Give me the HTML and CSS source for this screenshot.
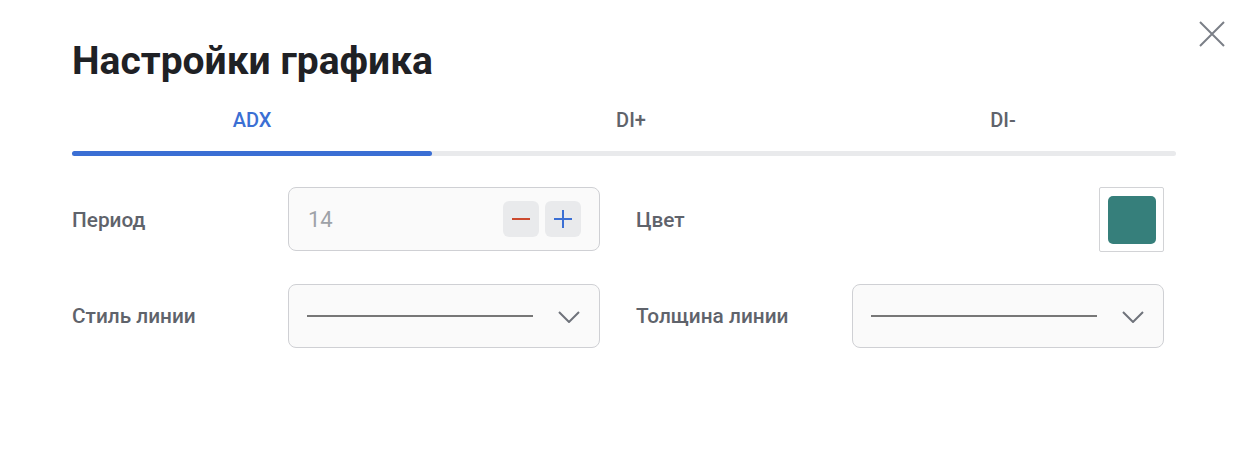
FILE: index.html
```html
<!DOCTYPE html>
<html lang="ru">
<head>
<meta charset="utf-8">
<title>Настройки графика</title>
<link rel="stylesheet" href="styles.css">
</head>
<body>
<div class="modal">
  <button class="close" aria-label="Закрыть">
    <svg width="26" height="26" viewBox="0 0 26 26"><path d="M1 1L25 25M25 1L1 25" stroke="#7b7f87" stroke-width="2" fill="none"/></svg>
  </button>
  <h1 class="title">Настройки графика</h1>
  <div class="tabs">
    <div class="tab active">ADX</div>
    <div class="tab">DI+</div>
    <div class="tab">DI-</div>
  </div>
  <div class="track"><div class="track-fill"></div></div>
  <div class="form">
    <div class="label">Период</div>
    <div class="field stepper">
      <span class="value">14</span>
      <div class="btns">
        <button class="step"><svg width="20" height="20" viewBox="0 0 20 20"><path d="M1 10H19" stroke="#cc4a2f" stroke-width="2"/></svg></button>
        <button class="step"><svg width="20" height="20" viewBox="0 0 20 20"><path d="M1 10H19M10 1V19" stroke="#3b6fd4" stroke-width="2"/></svg></button>
      </div>
    </div>
    <div class="label label-right">Цвет</div>
    <div class="color-cell"><div class="swatch-box"><div class="swatch"></div></div></div>

    <div class="label">Стиль линии</div>
    <div class="field select">
      <span class="line"></span>
      <svg class="chev" width="22" height="12" viewBox="0 0 22 12"><path d="M1 1L11 11L21 1" stroke="#6f737b" stroke-width="2" fill="none"/></svg>
    </div>
    <div class="label label-right">Толщина линии</div>
    <div class="field select">
      <span class="line"></span>
      <svg class="chev" width="22" height="12" viewBox="0 0 22 12"><path d="M1 1L11 11L21 1" stroke="#6f737b" stroke-width="2" fill="none"/></svg>
    </div>
  </div>
</div>
</body>
</html>
```
FILE: styles.css
```css
* { box-sizing: border-box; }
html, body { margin: 0; padding: 0; background: #fff; }
body { font-family: Roboto, "Noto Sans", sans-serif; }
.modal {
  position: relative;
  width: 1242px;
  height: 450px;
  padding: 34px 66px 0 72px;
}
.close {
  position: absolute;
  top: 21px;
  right: 17px;
  width: 26px;
  height: 26px;
  padding: 0;
  border: 0;
  background: none;
}
.close svg { display: block; }
.title {
  margin: 0;
  font-size: 39px;
  line-height: 54px;
  font-weight: 700;
  color: #1f2125;
}
.tabs {
  display: grid;
  grid-template-columns: 360px 398px 346px;
  margin-top: 20px;
}
.tab {
  text-align: center;
  font-size: 20px;
  font-weight: 500;
  line-height: 24px;
  color: #5f636b;
}
.tab.active { color: #3b6fd4; }
.track {
  margin-top: 19px;
  width: 1104px;
  height: 5px;
  border-radius: 3px;
  background: #e9eaec;
}
.track-fill {
  width: 360px;
  height: 5px;
  border-radius: 3px;
  background: #3b6fd4;
}
.form {
  display: grid;
  grid-template-columns: 216px 312px 252px 312px;
  row-gap: 32px;
  margin-top: 31px;
  width: 1092px;
}
.label {
  display: flex;
  align-items: center;
  font-size: 20.8px;
  font-weight: 500;
  color: #5f636b;
}
.label-right { padding-left: 36px; }
.field {
  height: 64px;
  border: 1px solid #cfd0d4;
  border-radius: 8px;
  background: #fafafa;
  display: flex;
  align-items: center;
}
.stepper { padding: 0 18px 0 19px; justify-content: space-between; }
.value { font-size: 22px; color: #9ea2a8; }
.btns { display: flex; gap: 6px; }
.step {
  width: 36px;
  height: 36px;
  border: 0;
  padding: 0;
  border-radius: 6px;
  background: #e9eaec;
  display: flex;
  align-items: center;
  justify-content: center;
}
.color-cell { display: flex; justify-content: flex-end; }
.swatch-box {
  width: 65px;
  height: 65px;
  border: 1px solid #d2d3d6;
  border-radius: 2px;
  display: flex;
  align-items: center;
  justify-content: center;
}
.swatch {
  width: 48px;
  height: 48px;
  border-radius: 5px;
  background: #367f7b;
}
.select { padding: 0 19px 0 18px; justify-content: space-between; }
.line { width: 226px; height: 2px; background: #777; }
.chev { display: block; margin-top: 1px; }
```
